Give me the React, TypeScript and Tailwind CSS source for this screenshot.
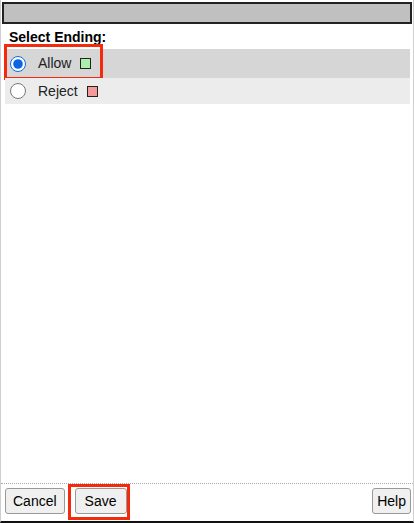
import { useState } from "react";

const font = { fontFamily: "'Liberation Sans', Arial, sans-serif" };

function Option({
  label,
  color,
  checked,
  bg,
  h,
  marked,
  onPick,
}: {
  label: string;
  color: string;
  checked: boolean;
  bg: string;
  h: string;
  marked?: boolean;
  onPick: () => void;
}) {
  return (
    <div className={`relative flex items-center ${h} ${bg}`} onClick={onPick}>
      <input
        type="radio"
        name="ending"
        checked={checked}
        onChange={onPick}
        className="m-0 ml-[5px] w-[16px] h-[16px] accent-[#0a66e4]"
      />
      <span className="ml-[12px] text-[14px] text-[#222]">{label}</span>
      <span className={`ml-[9px] w-[11px] h-[11px] border border-[#222] ${color}`} />
      {marked && (
        <div className="absolute left-[-1px] top-[-5px] w-[99px] h-[36px] border-[3px] border-[#f42a0c] pointer-events-none" />
      )}
    </div>
  );
}

export default function App() {
  const [ending, setEnding] = useState<"allow" | "reject">("allow");

  return (
    <div style={font} className="w-[414px] h-[523px] bg-white flex flex-col border-l border-r border-[#cfcfcf] border-b-2 border-b-[#111]">
      <div className="mx-[1px] mt-[2px] h-[22px] bg-[#c0c0c0] border-2 border-[#222]" />

      <div className="pl-[8px] pt-[5px] pb-[3px] text-[14px] leading-[17px] font-bold text-black">Select Ending:</div>

      <div className="ml-[4px] mr-[3px]">
        <Option
          label="Allow"
          color="bg-[#aaf0aa]"
          bg="bg-[#d6d6d6]"
          h="h-[29px]"
          checked={ending === "allow"}
          marked
          onPick={() => setEnding("allow")}
        />
        <Option
          label="Reject"
          color="bg-[#f59a9a]"
          bg="bg-[#ececec]"
          h="h-[26px]"
          checked={ending === "reject"}
          onPick={() => setEnding("reject")}
        />
      </div>

      <div className="flex-1" />

      <div className="border-t border-dotted border-[#aaa] flex items-start pt-[4px] h-[38px] pl-[4px] pr-[2px] text-[14px] text-black">
        <button className="h-[26px] px-[7px] bg-[#f0f0f0] border border-[#999] rounded-[3px]">Cancel</button>
        <div className="relative ml-[10px]">
          <button className="h-[26px] px-[9px] bg-[#f0f0f0] border border-[#999] rounded-[3px]">Save</button>
          <div className="absolute left-[-7px] top-[-4px] w-[62px] h-[36px] border-[3px] border-[#f42a0c] pointer-events-none" />
        </div>
        <div className="flex-1" />
        <button className="h-[26px] px-[4px] bg-[#f0f0f0] border border-[#999] rounded-[3px]">Help</button>
      </div>
    </div>
  );
}
